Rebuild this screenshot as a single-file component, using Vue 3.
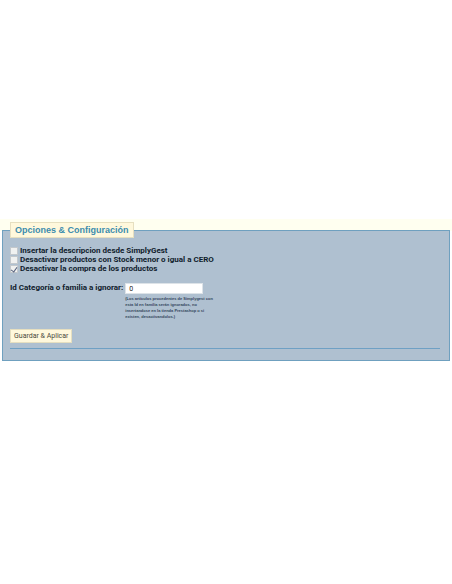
<template>
  <main class="page">
    <form class="config" @submit.prevent="save">
      <fieldset class="panel">
        <legend>Opciones &amp; Configuración</legend>

        <div class="options">
          <label v-for="opt in options" :key="opt.id" class="option">
            <input v-model="opt.checked" type="checkbox" />
            <span>{{ opt.label }}</span>
          </label>
        </div>

        <div class="field">
          <label for="category">Id Categoría o familia a ignorar:</label>
          <div class="field-body">
            <input id="category" v-model="category" type="text" aria-describedby="category-help" />
            <p id="category-help" class="help">
              (Los artículos procedentes de Simplygest con<br />
              esta Id en familia serán ignorados, no<br />
              insertandose en la tienda Prestashop o si<br />
              existen, desactivandolos.)
            </p>
          </div>
        </div>

        <button class="btn" type="submit">Guardar &amp; Aplicar</button>
        <hr />
      </fieldset>
    </form>
  </main>
</template>

<script setup>
import { ref } from 'vue'

const options = ref([
  { id: 'description', label: 'Insertar la descripcion desde SimplyGest', checked: false },
  { id: 'stock', label: 'Desactivar productos con Stock menor o igual a CERO', checked: false },
  { id: 'purchase', label: 'Desactivar la compra de los productos', checked: true },
])
const category = ref('0')

const emit = defineEmits(['save'])

function save() {
  emit('save', { options: options.value, category: category.value })
}
</script>

<style>
body {
  margin: 0;
  background: #fff;
}
</style>

<style scoped>
* {
  box-sizing: border-box;
}

.page {
  min-height: 100vh;
  display: flex;
  align-items: center;
  padding-bottom: 4px;
  font-family: Roboto, 'Liberation Sans', Arial, sans-serif;
  color: #101c2c;
}

.config {
  flex: 1;
  padding: 3px 2px 0;
  background: linear-gradient(#fffff0 12px, transparent 12px);
}

.panel {
  min-width: 0;
  margin: 0;
  padding: 8px 9px 11px 7px;
  border: 1px solid #6fa0bf;
  background: #afc0d0;
}

legend {
  padding: 0 4px;
  border: 1px solid #e6dfc0;
  background: #fff8dc;
  color: #3c8cae;
  font-family: 'Liberation Sans', Arial, sans-serif;
  font-size: 9px;
  font-weight: bold;
  line-height: 14px;
}

.options {
  display: flex;
  flex-direction: column;
}

.option {
  display: flex;
  align-items: center;
  gap: 2px;
  font-size: 8px;
  font-weight: bold;
  line-height: 9px;
}
.option input {
  appearance: none;
  width: 8px;
  height: 8px;
  margin: 0;
  border: 1px solid #c3c8cc;
  background: #f0f1f0;
}
.option input:checked {
  display: flex;
  justify-content: center;
}
.option input:checked::after {
  content: '';
  width: 3px;
  height: 5px;
  border: solid #56627e;
  border-width: 0 1px 1px 0;
  transform: rotate(35deg);
}

.field {
  display: flex;
  gap: 2px;
  margin-top: 10px;
  font-size: 8px;
  font-weight: bold;
  line-height: 10px;
}
.field-body {
  display: flex;
  flex-direction: column;
  gap: 2px;
}
.field input {
  width: 78px;
  height: 11px;
  padding: 0 3px;
  border: 1px solid #dde3e8;
  background: #fff;
  color: #222;
  font-family: inherit;
  font-size: 7px;
}
.help {
  margin: 0;
  color: #35475c;
  font-family: 'Liberation Sans', Arial, sans-serif;
  font-size: 4px;
  line-height: 6px;
}

.btn {
  display: block;
  margin-top: 9px;
  padding: 0 3px;
  border: 1px solid #e6dfc0;
  border-radius: 0;
  background: #fff8dc;
  color: #4a4a40;
  font-family: inherit;
  font-size: 7px;
  line-height: 12px;
  cursor: pointer;
}

hr {
  height: 1px;
  margin: 5px 0 0;
  border: 0;
  background: #6fa0c4;
}
</style>
